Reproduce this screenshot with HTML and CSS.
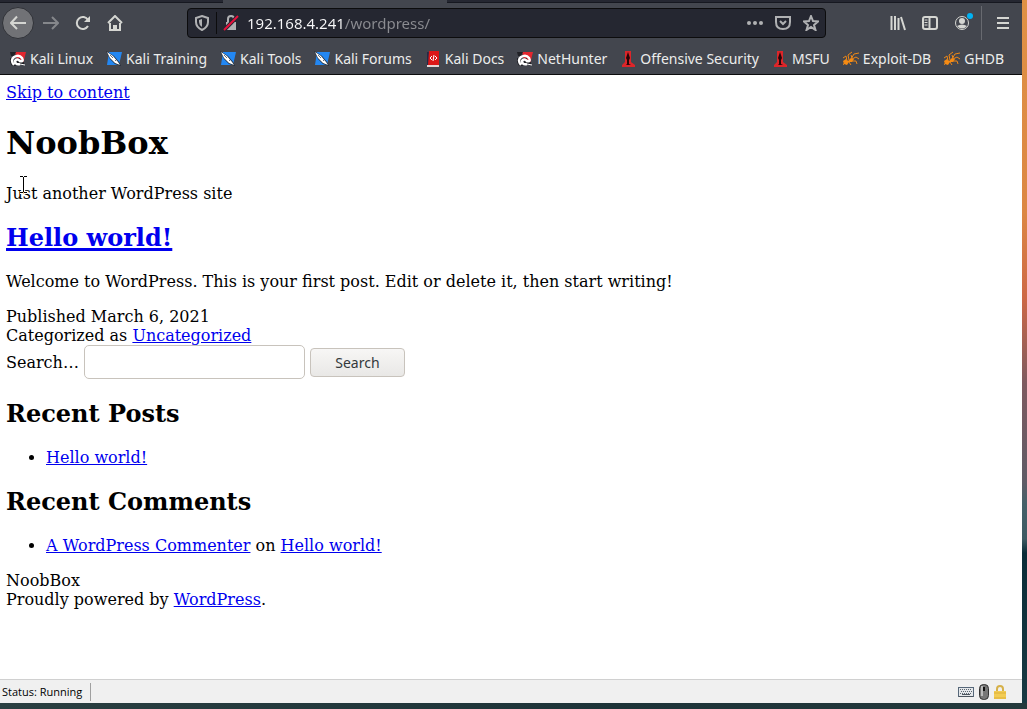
FILE: index.html
```
<!DOCTYPE html>
<html lang="en">
<head>
<meta charset="utf-8">
<title>NoobBox – Just another WordPress site</title>
<link rel="stylesheet" href="styles.css">
</head>
<body>
<svg class="defs" aria-hidden="true">
  <symbol id="dragon" viewBox="0 0 16 16">
    <path d="M5 1H16L13 13L7 8Z" fill="#e3262e"/>
    <path d="M0 1H6L4 5H1ZM0 7H3L6 15H2L0 11Z" fill="#202126"/>
    <path d="M7 8L10 7L11 12L7 12Z" fill="#202126"/>
    <path d="M9 11Q11 13 14 12" fill="none" stroke="#202126" stroke-width="3"/>
    <path d="M4 14Q0 9 4 6Q9 3 12 7Q14 11 10 10Q7 7 5 10Q5 14 10 13" fill="none" stroke="#fff" stroke-width="2.500"/>
    <path d="M10 13L15 14" fill="none" stroke="#fff"/>
  </symbol>
  <symbol id="knife" viewBox="0 0 16 16">
    <path d="M3 1H16L13 14H1Z" fill="#2387f2"/>
    <path d="M0 0L8 5L13 11L15 15L9 13L4 8Z" fill="#202a35"/>
    <path d="M1 1L7 5L12 11L14 14L9 12L4 7Z" fill="#fff"/>
    <path d="M4 4L7 7M9 9L10 10" stroke="#66717c" fill="none"/>
  </symbol>
  <symbol id="book" viewBox="0 0 16 16">
    <path d="M2 1H5V15H2Z" fill="#252a48"/><path d="M4 0H14V14H3Z" fill="#dc1717"/>
    <path d="M2 14H14V16H2Z" fill="#e4d5d5"/>
    <path d="M7 5L5 7L7 9M9 4L8 10M10 5L12 7L10 9" stroke="#fff" fill="none"/>
  </symbol>
  <symbol id="tower" viewBox="0 0 16 16">
    <path d="M5 0H11V11L15 14V16H2V14L5 11Z" fill="#dc2529"/>
    <path d="M8 1L9 4L10 7L9 9V13L11 14H6L7 13V9L6 7L7 4Z" fill="#260507"/>
  </symbol>
  <symbol id="ant" viewBox="0 0 16 16">
    <path d="M0 10L3 8L5 10L8 7L11 8L9 11L6 11L4 14L1 13Z" fill="#f68b13"/>
    <path d="M4 10L3 5L0 7M6 9L5 4L9 1M8 8L11 3L16 2M9 8L13 6L16 8M9 10L13 10L14 13M6 11L8 14M2 11L0 14M9 7L8 4" stroke="#ed8717" fill="none"/>
  </symbol>
</svg>
<div class="window">
  <div class="tabs"><span class="tab"></span></div>
  <header class="browser">
    <nav class="toolbar" aria-label="Browser">
      <button class="tool back" aria-label="Back"><svg viewBox="0 0 16 16"><path d="M16 8H1M7 1.500L1 8L7 14" /></svg></button>
      <button class="tool dim" aria-label="Forward"><svg viewBox="0 0 16 16"><path d="M0 8H15M9 2L15 8L9 14"/></svg></button>
      <button class="tool" aria-label="Reload"><svg viewBox="0 0 16 16"><path d="M13 5A6 6 0 1 0 13 11"/><path d="M15 1V7H9Z" class="fill"/></svg></button>
      <button class="tool" aria-label="Home"><svg viewBox="0 0 16 16"><path d="M1 8L8 1L15 8M3 8V15H13V8"/><path d="M7 15V11H9V15" /></svg></button>
      <form class="urlbar">
        <button type="button" class="slot" aria-label="Protection"><svg viewBox="0 0 16 16"><path d="M8 1L14 3V7Q14 12 8 15Q2 12 2 7V3Z"/><path d="M8 4V12Q5 10 5 7V5Z" class="fill"/></svg></button>
        <span class="rule"></span>
        <button type="button" class="slot" aria-label="Connection not secure"><svg viewBox="0 0 16 16"><path d="M5 8V4Q5 1 8 1Q11 1 11 4V8"/><path d="M3 7H13V15H3Z" class="fill"/><path d="M1 15L15 1" class="slash-bg"/><path d="M1 15L15 1" class="slash"/></svg></button>
        <input class="address" aria-label="Address" value="192.168.4.241/wordpress/">
        <button type="button" class="slot" aria-label="Page actions"><svg viewBox="0 0 16 16"><circle cx="2" cy="8" r="2" class="fill"/><circle cx="8" cy="8" r="2" class="fill"/><circle cx="14" cy="8" r="2" class="fill"/></svg></button>
        <button type="button" class="slot" aria-label="Save to Pocket"><svg viewBox="0 0 16 16"><path d="M1 2H15V7Q15 14 8 14Q1 14 1 7Z"/><path d="M5 6L8 9L11 6"/></svg></button>
        <button type="button" class="slot" aria-label="Bookmark"><svg viewBox="0 0 16 16"><path d="M8 1L10 6L15 6.500L11 10L12.500 15L8 12L3.500 15L5 10L1 6.500L6 6Z"/></svg></button>
      </form>
      <button class="tool" aria-label="Library"><svg viewBox="0 0 16 16"><path d="M1.500 1V15M5 1V15M8.500 3V15M11 2L15 15"/></svg></button>
      <button class="tool" aria-label="Sidebars"><svg viewBox="0 0 16 16"><rect x="1" y="2" width="14" height="12" rx="2"/><path d="M7.500 2V14"/><path d="M2.500 5H5.500M2.500 7.500H5.500M2.500 10H5.500" class="thin"/></svg></button>
      <button class="tool account" aria-label="Account"><svg viewBox="0 0 16 16"><circle cx="8" cy="8" r="6.500" class="thin"/><circle cx="8" cy="6" r="3" class="fill"/><path d="M3 11Q8 8 13 11Q8 16 3 11Z" class="fill"/></svg><span class="badge"></span></button>
      <span class="divider"></span>
      <button class="tool" aria-label="Menu"><svg viewBox="0 0 16 16"><path d="M2 3H14M2 8H14M2 13H14"/></svg></button>
    </nav>
    <nav class="bookmarks" aria-label="Bookmarks">
      <a href="#"><svg><use href="#dragon"/></svg>Kali Linux</a>
      <a href="#"><svg><use href="#knife"/></svg>Kali Training</a>
      <a href="#"><svg><use href="#knife"/></svg>Kali Tools</a>
      <a href="#"><svg><use href="#knife"/></svg>Kali Forums</a>
      <a href="#"><svg><use href="#book"/></svg>Kali Docs</a>
      <a href="#"><svg><use href="#dragon"/></svg>NetHunter</a>
      <a href="#"><svg><use href="#tower"/></svg>Offensive Security</a>
      <a href="#"><svg><use href="#tower"/></svg>MSFU</a>
      <a href="#"><svg><use href="#ant"/></svg>Exploit-DB</a>
      <a href="#"><svg><use href="#ant"/></svg>GHDB</a>
    </nav>
  </header>
  <main class="page">
    <a href="#content">Skip to content</a>
    <h1>NoobBox</h1>
    <p class="tagline">Just another WordPress site</p>
    <h2 id="content"><a href="#">Hello world!</a></h2>
    <p>Welcome to WordPress. This is your first post. Edit or delete it, then start writing!</p>
    <div>Published March 6, 2021</div>
    <div>Categorized as <a href="#">Uncategorized</a></div>
    <form class="search">
      <label for="q">Search…</label>
      <input id="q" type="search">
      <button type="button">Search</button>
    </form>
    <h2>Recent Posts</h2>
    <ul><li><a href="#">Hello world!</a></li></ul>
    <h2>Recent Comments</h2>
    <ul><li><a href="#">A WordPress Commenter</a> on <a href="#">Hello world!</a></li></ul>
    <div>NoobBox</div>
    <div>Proudly powered by <a href="#">WordPress</a>.</div>
    <svg class="cursor" viewBox="0 0 7 17" aria-hidden="true"><path d="M0 .5H3M4 .5H7M3.500 1V16M0 16.500H3M4 16.500H7" class="halo"/><path d="M0 .5H3M4 .5H7M3.500 1V16M0 16.500H3M4 16.500H7"/></svg>
  </main>
  <footer class="status">
    <span class="state">Status: Running</span>
    <span class="devices">
      <svg class="keyboard" viewBox="0 0 16 12"><rect x=".5" y="1.500" width="15" height="9" fill="#e4e7ea" stroke="#566779"/><path d="M2 3.500H14M3 5.500H14M2 7.500H14" stroke="#5c6670" stroke-dasharray="1 1"/><path d="M4 8.500H12M1 10.500H15" stroke="#4d565f"/></svg>
      <svg class="mouse" viewBox="0 0 10 16"><rect x=".5" y=".5" width="9" height="15" rx="4" fill="#777" stroke="#333"/><path d="M3 2V12" stroke="#bbb" stroke-width="2"/><path d="M5 3V7" stroke="#111" stroke-width="2"/></svg>
      <svg class="lock" viewBox="0 0 12 14"><path d="M3 7V4Q3 1 6 1Q9 1 9 4V7" fill="none" stroke="#d6b14a" stroke-width="2"/><rect y="6" width="12" height="8" fill="#f2cc55"/><path d="M0 8H12M0 13H12" stroke="#ddb03a"/></svg>
    </span>
  </footer>
</div>
</body>
</html>
```
FILE: styles.css
```
* { box-sizing: border-box; }

body {
  margin: 0;
  min-height: 100vh;
  display: flex;
  padding: 0 5px 6px 0;
  background:
    linear-gradient(90deg, #2a3f41, #1d3338 60%, #24393c) bottom / 100% 6px no-repeat,
    linear-gradient(#df9145 0, #dc8744 30%, #cd6846 42%, #7e5a60 54%, #5f5b66 68%, #456069 71%, #3e5a63 76%, #0a2c38 78%, #193a43 100%);
}

.defs { position: absolute; width: 0; height: 0; }

.window {
  flex: 1;
  min-width: 0;
  display: flex;
  flex-direction: column;
  background: #fff;
}

.tabs {
  height: 3px;
  padding-left: 223px;
  background: #252731;
  border-bottom: 1px solid #161820;
  display: flex;
}
.tab { width: 224px; height: 3px; background: #43464e; }

.browser {
  background: #43464e;
  border-bottom: 1px solid #0c0c0d;
  font-family: "Noto Sans", sans-serif;
}

.toolbar {
  display: flex;
  align-items: center;
  height: 40px;
  padding: 0 3px 0 2px;
}
button { font: inherit; }
.tool, .slot {
  display: flex;
  flex: none;
  align-items: center;
  justify-content: center;
  padding: 0;
  border: 0;
  background: none;
  color: #d5d6d2;
}
.tool { width: 32px; height: 32px; }
.tool svg, .slot svg {
  width: 16px;
  height: 16px;
  fill: none;
  stroke: currentColor;
  stroke-width: 2;
}
.tool .fill, .slot .fill { fill: currentColor; stroke: none; }
.tool .thin { stroke-width: 1; }
.tool.back { margin-right: 1px; border-radius: 50%; background: #717276; border: 1px solid #303238; }
.tool.dim { color: #85878b; }

.urlbar {
  flex: 1;
  display: flex;
  align-items: center;
  height: 30px;
  margin: 0 56px;
  border: 1px solid #0c0c0d;
  border-radius: 4px;
  background: #252731;
}
.slot { width: 28px; height: 28px; color: #b0b1b3; }
.rule { width: 1px; height: 22px; background: #0c0c0d; }
.slot .slash-bg { stroke: #252731; stroke-width: 4; }
.slot .slash { stroke: #e8103c; }
.address {
  flex: 1;
  min-width: 0;
  height: 28px;
  padding: 0 0 0 2px;
  border: 0;
  outline: 0;
  font: 15px/28px "Noto Sans", sans-serif;
  color: transparent;
  caret-color: #fff;
  background: linear-gradient(90deg, #f9f9fa 99px, #8b8c91 99px);
  -webkit-background-clip: text;
  background-clip: text;
}
.account { position: relative; }
.badge {
  position: absolute;
  top: 6px;
  right: 5px;
  width: 6px;
  height: 6px;
  border-radius: 50%;
  background: #00b3f4;
}
.divider { width: 1px; height: 34px; margin: 0 5px 0 3px; background: #686a70; }

.bookmarks {
  display: flex;
  gap: 13px;
  height: 31px;
  padding-left: 10px;
  overflow: hidden;
  font-size: 14px;
  line-height: 31px;
  white-space: nowrap;
}
.bookmarks a {
  display: flex;
  align-items: center;
  gap: 4px;
  color: #ecedec;
  text-decoration: none;
}
.bookmarks svg { width: 16px; height: 16px; }

.page {
  position: relative;
  flex: 1;
  padding: 8px 6px;
  color: #000;
  font: 16px/19px "DejaVu Serif", serif;
}
.page a { color: #0000ee; }
h1 { margin: 22px 0; font-size: 32px; line-height: 38px; }
h2 { margin: 20px 0; font-size: 24px; line-height: 29px; }
.page h2 a { text-decoration-thickness: 3px; }
.page p { margin: 16px 0; }
.page ul { margin: 16px 0; padding-left: 40px; }

.search { display: flex; align-items: center; gap: 5px; }
.search input {
  width: 221px;
  height: 34px;
  border: 1px solid #c8c3bc;
  border-radius: 5px;
  background: #fff;
  appearance: none;
}
.search button {
  width: 95px;
  height: 29px;
  padding: 0;
  border: 1px solid #c8c3bc;
  border-radius: 4px;
  background: linear-gradient(#f7f6f5, #e9e8e6);
  color: #33393b;
  font: 14px/27px "Noto Sans", sans-serif;
}
.cursor {
  position: absolute;
  left: 20px;
  top: 101px;
  width: 7px;
  height: 17px;
  overflow: visible;
  fill: none;
  stroke: #000;
}
.cursor .halo { stroke: #fff; stroke-width: 3; }

.status {
  display: flex;
  align-items: center;
  justify-content: space-between;
  height: 24px;
  padding: 0 16px 0 2px;
  border-top: 1px solid #d0d0d0;
  background: #f0f0f0;
  color: #000;
  font: 11px/18px "Open Sans", sans-serif;
}
.state { padding-right: 8px; border-right: 1px solid #a0a0a0; }
.devices { display: flex; align-items: center; gap: 5px; }
.keyboard { width: 16px; height: 12px; }
.mouse { width: 10px; height: 16px; }
.lock { width: 12px; height: 14px; }
```
